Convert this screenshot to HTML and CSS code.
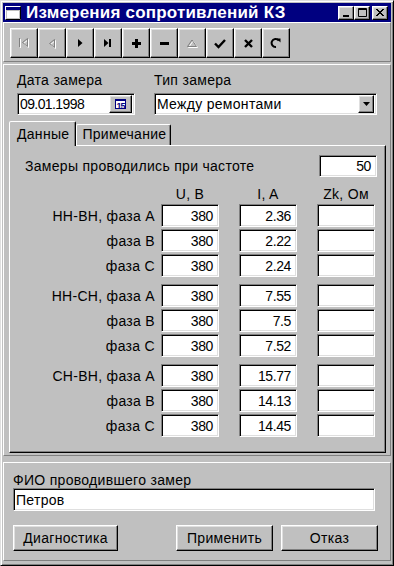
FILE: index.html
```html
<!DOCTYPE html>
<html lang="ru">
<head>
  <meta charset="UTF-8" />
  <title>Измерения сопротивлений КЗ</title>
  <link rel="stylesheet" href="styles.css">
</head>
<body>
  <div class="window">
    <div class="titlebar">
      <svg class="app-icon" width="16" height="14" viewBox="0 0 16 14">
        <rect x="0.5" y="0.5" width="15" height="13" fill="#c0c0c0" stroke="#fff"/>
        <rect x="1" y="1" width="14" height="3" fill="#000080"/>
        <path d="M15.5 0.5V13.5H0.5" fill="none" stroke="#000"/>
        <rect x="2" y="5" width="12" height="7" fill="#fff"/>
      </svg>
      <span class="title">Измерения сопротивлений КЗ</span>
      <div class="caption-buttons">
        <span class="cap-btn">
          <svg width="8" height="8" viewBox="0 0 8 8"><rect x="1" y="6" width="6" height="2" fill="#000"/></svg>
        </span>
        <span class="cap-btn">
          <svg width="9" height="9" viewBox="0 0 9 9"><path d="M0.5 0.5H8.5V8.5H0.5Z M0 1.5H9" fill="none" stroke="#000"/></svg>
        </span>
        <span class="cap-btn close">
          <svg width="8" height="7" viewBox="0 0 8 7"><path d="M0 0L7 7M1 0L8 7M7 0L0 7M8 0L1 7" stroke="#000" stroke-width="1"/></svg>
        </span>
      </div>
    </div>

    <div class="toolbar panel">
      <div class="nav">
        <span class="tool">
          <svg width="12" height="12" viewBox="0 0 12 12">
            <g transform="translate(1 1)" fill="none" stroke="#fff"><path d="M1.5 1V10" /><path d="M9.5 1.5V9.5L4.5 5.5Z"/></g>
            <g fill="none" stroke="#808080"><path d="M1.5 1V10" /><path d="M9.5 1.5V9.5L4.5 5.5Z"/></g>
          </svg>
        </span>
        <span class="tool">
          <svg width="12" height="12" viewBox="0 0 12 12">
            <path d="M8.5 2.5V10.5L3.5 6.5Z" fill="none" stroke="#fff" transform="translate(1 1)"/>
            <path d="M8.5 2.5V10.5L3.5 6.5Z" fill="none" stroke="#808080"/>
          </svg>
        </span>
        <span class="tool">
          <svg width="10" height="10" viewBox="0 0 10 10"><path d="M3 1L7.5 5L3 9Z" fill="#000"/></svg>
        </span>
        <span class="tool">
          <svg width="12" height="10" viewBox="0 0 12 10"><path d="M2 1L6.5 5L2 9Z" fill="#000"/><rect x="7" y="1" width="2" height="8" fill="#000"/></svg>
        </span>
        <span class="tool">
          <svg width="11" height="11" viewBox="0 0 11 11"><path d="M4 1H7V4H10V7H7V10H4V7H1V4H4Z" fill="#000"/></svg>
        </span>
        <span class="tool">
          <svg width="11" height="11" viewBox="0 0 11 11"><rect x="1" y="4" width="9" height="3" fill="#000"/></svg>
        </span>
        <span class="tool">
          <svg width="13" height="10" viewBox="0 0 13 10">
            <path d="M1.5 8.5H10.5L6 2Z" fill="none" stroke="#fff" transform="translate(1 1)"/>
            <path d="M1.5 8.5H10.5L6 2Z" fill="none" stroke="#808080"/>
          </svg>
        </span>
        <span class="tool">
          <svg width="12" height="11" viewBox="0 0 12 11"><path d="M1 5.5L4.5 9L11 2" fill="none" stroke="#000" stroke-width="2.4"/></svg>
        </span>
        <span class="tool">
          <svg width="11" height="11" viewBox="0 0 11 11"><path d="M2 2L9 9M9 2L2 9" stroke="#000" stroke-width="2.4"/></svg>
        </span>
        <span class="tool">
          <svg width="12" height="12" viewBox="0 0 12 12">
            <path d="M8.8 3.6A4 4 0 1 0 6 10" fill="none" stroke="#000" stroke-width="2"/>
            <path d="M6.5 1.5H10.5V5.5Z" fill="#000"/>
          </svg>
        </span>
      </div>
    </div>

    <div class="main panel">
      <div class="head-row">
        <div class="field date-field">
          <span class="caption">Дата замера</span>
          <div class="edit date-edit">
            <span class="value digits">09.01.1998</span>
            <span class="cal-btn"><span class="cal-icon">15</span></span>
          </div>
        </div>
        <div class="field type-field">
          <span class="caption">Тип замера</span>
          <div class="edit combo">
            <span class="value">Между ремонтами</span>
            <span class="drop-btn">
              <svg width="7" height="4" viewBox="0 0 7 4"><path d="M0 0H7L3.5 4Z" fill="#000"/></svg>
            </span>
          </div>
        </div>
      </div>

      <div class="tabs">
        <span class="tab active">Данные</span>
        <span class="tab">Примечание</span>
      </div>
      <div class="tab-sheet">
        <div class="freq-row">
          <span class="freq-label">Замеры проводились при частоте</span>
          <span class="edit num">50</span>
        </div>
        <div class="grid-head">
          <span>U, B</span>
          <span>I, A</span>
          <span>Zk, Ом</span>
        </div>

        <div class="group">
          <div class="row"><span class="row-label">НН-ВН, фаза А</span><span class="edit num">380</span><span class="edit num">2.36</span><span class="edit num"></span></div>
          <div class="row"><span class="row-label">фаза В</span><span class="edit num">380</span><span class="edit num">2.22</span><span class="edit num"></span></div>
          <div class="row"><span class="row-label">фаза С</span><span class="edit num">380</span><span class="edit num">2.24</span><span class="edit num"></span></div>
        </div>
        <div class="group">
          <div class="row"><span class="row-label">НН-СН, фаза А</span><span class="edit num">380</span><span class="edit num">7.55</span><span class="edit num"></span></div>
          <div class="row"><span class="row-label">фаза В</span><span class="edit num">380</span><span class="edit num">7.5</span><span class="edit num"></span></div>
          <div class="row"><span class="row-label">фаза С</span><span class="edit num">380</span><span class="edit num">7.52</span><span class="edit num"></span></div>
        </div>
        <div class="group last">
          <div class="row"><span class="row-label">СН-ВН, фаза А</span><span class="edit num">380</span><span class="edit num">15.77</span><span class="edit num"></span></div>
          <div class="row"><span class="row-label">фаза В</span><span class="edit num">380</span><span class="edit num">14.13</span><span class="edit num"></span></div>
          <div class="row"><span class="row-label">фаза С</span><span class="edit num">380</span><span class="edit num">14.45</span><span class="edit num"></span></div>
        </div>
      </div>
    </div>

    <div class="bottom panel">
      <span class="caption">ФИО проводившего замер</span>
      <div class="edit fio"><span class="value">Петров</span></div>
      <div class="buttons">
        <span class="btn diag">Диагностика</span>
        <span class="btn">Применить</span>
        <span class="btn">Отказ</span>
      </div>
    </div>
  </div>
</body>
</html>
```

FILE: styles.css
```css
body {
  margin: 0;
  font-family: "Liberation Sans", Arial, sans-serif;
  font-size: 14px;
  letter-spacing: 0.3px;
  color: #000;
  background: #c0c0c0;
}
.window {
  width: 394px;
  height: 566px;
  box-sizing: border-box;
  background: #c0c0c0;
  border: 1px solid;
  border-color: #dfdfdf #000 #000 #dfdfdf;
  box-shadow: inset 1px 1px #fff, inset -1px -1px #808080;
  padding: 2px;
  display: flex;
  flex-direction: column;
}
.titlebar {
  height: 19px;
  background: #000080;
  color: #fff;
  display: flex;
  align-items: center;
  padding: 0 3px 0 2px;
}
.app-icon {
  margin-right: 5px;
}
.title {
  font-weight: bold;
  font-size: 17px;
  letter-spacing: 0.2px;
}
.caption-buttons {
  margin-left: auto;
  display: flex;
}
.cap-btn {
  width: 16px;
  height: 14px;
  box-sizing: border-box;
  background: #c0c0c0;
  border: 1px solid;
  border-color: #fff #000 #000 #fff;
  box-shadow: inset -1px -1px #808080, inset 1px 1px #dfdfdf;
  display: flex;
  align-items: center;
  justify-content: center;
}
.cap-btn.close {
  margin-left: 2px;
}

/* panels */
.panel {
  box-sizing: border-box;
  border: 1px solid;
  border-color: #fff #808080 #808080 #fff;
}
.toolbar {
  height: 40px;
  padding: 5px 6px;
}
.nav {
  display: flex;
}
.tool {
  width: 28px;
  height: 30px;
  box-sizing: border-box;
  border: 1px solid;
  border-color: #fff #000 #000 #fff;
  box-shadow: inset -1px -1px #808080, inset 1px 1px #dfdfdf;
  display: flex;
  align-items: center;
  justify-content: center;
}

.main {
  margin-top: 2px;
  height: 392px;
  padding: 7px 4px 0 5px;
}
.head-row {
  display: flex;
  padding-left: 8px;
}
.field {
  display: flex;
  flex-direction: column;
}
.caption {
  line-height: 16px;
  margin-bottom: 5px;
}
.type-field {
  margin-left: 19px;
}
.edit {
  box-sizing: border-box;
  background: #fff;
  border: 1px solid;
  border-color: #808080 #fff #fff #808080;
  box-shadow: inset 1px 1px #000, inset -1px -1px #dfdfdf;
  display: flex;
  align-items: center;
}
.date-edit {
  width: 118px;
  height: 22px;
}
.combo {
  width: 223px;
  height: 22px;
}
.value {
  padding-left: 2px;
  flex: 1;
}
.digits {
  letter-spacing: -0.6px;
}
.cal-btn, .drop-btn {
  box-sizing: border-box;
  height: 18px;
  margin-right: 2px;
  background: #c0c0c0;
  border: 1px solid;
  border-color: #fff #000 #000 #fff;
  box-shadow: inset -1px -1px #808080, inset 1px 1px #dfdfdf;
  display: flex;
  align-items: center;
  justify-content: center;
}
.cal-btn {
  width: 23px;
}
.drop-btn {
  width: 16px;
}
.cal-icon {
  font-size: 9px;
  line-height: 10px;
  width: 11px;
  height: 10px;
  box-sizing: border-box;
  border: 1px solid #000080;
  border-top-width: 2px;
  background: #fff;
  color: #000080;
  text-align: center;
  font-weight: bold;
  letter-spacing: -1px;
}

/* tabs */
.tabs {
  display: flex;
  align-items: flex-end;
  height: 24px;
  margin-top: 6px;
}
.tab {
  box-sizing: border-box;
  height: 21px;
  padding: 0 4px 0 5px;
  line-height: 19px;
  border: 1px solid;
  border-bottom: none;
  border-color: #fff #000 transparent #fff;
  box-shadow: inset -1px 0 #808080;
  border-radius: 2px 2px 0 0;
}
.tab.active {
  height: 25px;
  margin-bottom: -1px;
  padding: 0 6px 0 7px;
  line-height: 24px;
  background: #c0c0c0;
  position: relative;
  z-index: 1;
}
.tab-sheet {
  box-sizing: border-box;
  height: 308px;
  border: 1px solid;
  border-color: #fff #000 #000 #fff;
  box-shadow: inset -1px -1px #808080;
  padding: 9px 8px 0 0;
}
.freq-row {
  display: flex;
  align-items: center;
  height: 22px;
}
.freq-label {
  padding-left: 15px;
  flex: 1;
}
.num {
  width: 58px;
  height: 23px;
  justify-content: flex-end;
  padding-right: 5px;
  letter-spacing: -0.4px;
}
.freq-row .num {
  height: 22px;
}
.grid-head {
  display: flex;
  padding-left: 151px;
  margin-top: 7px;
  height: 20px;
  line-height: 20px;
}
.grid-head span {
  width: 58px;
  text-align: center;
}
.grid-head span + span {
  margin-left: 20px;
}
.group {
  display: flex;
  flex-direction: column;
  gap: 2px;
  margin-bottom: 7px;
}
.row {
  display: flex;
  align-items: center;
}
.row-label {
  width: 145px;
  text-align: right;
  margin-right: 6px;
}
.row .num + .num {
  margin-left: 20px;
}

/* bottom */
.bottom {
  margin-top: 6px;
  height: 99px;
  padding: 9px 10px 0 9px;
}
.bottom .caption {
  margin-bottom: 1px;
}
.fio {
  width: 362px;
  height: 23px;
}
.buttons {
  display: flex;
  margin-top: 14px;
}
.btn {
  box-sizing: border-box;
  height: 26px;
  width: 97px;
  border: 1px solid;
  border-color: #fff #000 #000 #fff;
  box-shadow: inset -1px -1px #808080, inset 1px 1px #dfdfdf;
  display: flex;
  align-items: center;
  justify-content: center;
}
.btn.diag {
  width: 105px;
  margin-right: 58px;
}
.btn + .btn {
  margin-left: 8px;
}
.btn.diag + .btn {
  margin-left: 0;
}
```
